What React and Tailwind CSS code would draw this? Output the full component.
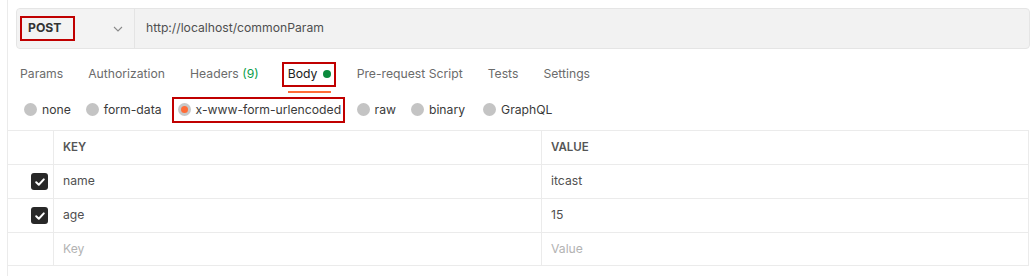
import React from "react";

function Radio({ label, selected }) {
  return (
    <div className="flex items-center gap-[5px] whitespace-nowrap">
      {selected ? (
        <span className="w-[13px] h-[13px] rounded-full bg-[#c8c8c8] flex items-center justify-center">
          <span className="w-[7px] h-[7px] rounded-full bg-[#ff6c37]"></span>
        </span>
      ) : (
        <span className="w-[13px] h-[13px] rounded-full bg-[#c4c4c4]"></span>
      )}
      <span className="text-[12.2px] text-[#3a3a3a]">{label}</span>
    </div>
  );
}

function Check() {
  return (
    <span className="w-[17px] h-[17px] rounded-[3px] bg-[#282828] flex items-center justify-center">
      <svg width="12" height="12" viewBox="0 0 12 12">
        <path d="M2.2 6.3 L4.8 8.8 L9.8 3.4" fill="none" stroke="#fff" strokeWidth="2" strokeLinecap="round" strokeLinejoin="round" />
      </svg>
    </span>
  );
}

export default function App() {
  const rows = [
    { check: true, key: "name", value: "itcast" },
    { check: true, key: "age", value: "15" },
    { check: false, key: "Key", value: "Value", placeholder: true },
  ];
  return (
    <div className="w-[1030px] h-[276px] bg-white font-['Inter',sans-serif] overflow-hidden">
      <div className="ml-[7px] border-l border-[#ebebeb] h-full pt-[8px]">
        {/* URL bar */}
        <div className="ml-[8px] w-[1014px] h-[41px] flex rounded-[4px] bg-[#f2f2f2] border border-[#e5e5e5]">
          <div className="w-[118px] flex items-center border-r border-[#e4e4e4] bg-[#f3f3f3] rounded-l-[4px]">
            <div className="ml-[3px] w-[55px] h-[25px] border-2 border-[#c00000] flex items-center pl-[6px]">
              <span className="text-[12.2px] font-bold text-[#333333]">POST</span>
            </div>
            <svg className="ml-[38px]" width="10" height="6" viewBox="0 0 10 6">
              <path d="M1 1 L5 5 L9 1" fill="none" stroke="#8a8a8a" strokeWidth="1.1" />
            </svg>
          </div>
          <div className="flex items-center pl-[11px] text-[12.2px] text-[#4f4f4f]">
            http://localhost/commonParam
          </div>
        </div>

        {/* Tabs */}
        <div className="flex items-center h-[30px] mt-[10px] pl-[12px] text-[12.2px] text-[#6b6b6b] whitespace-nowrap">
          <span>Params</span>
          <span className="ml-[25px]">Authorization</span>
          <span className="ml-[25px]">
            Headers <span className="text-[#0a9e4a]">(9)</span>
          </span>
          <div className="ml-[23px] relative w-[54px] h-[25px] border-2 border-[#c00000] flex items-center pl-[4px] gap-[6px]">
            <span className="text-[#212121]">Body</span>
            <span className="w-[8px] h-[8px] rounded-full bg-[#0b8a3c]"></span>
            <span className="absolute left-[4px] top-[27px] w-[43px] h-[2px] bg-[#ff6c37]"></span>
          </div>
          <span className="ml-[21px]">Pre-request Script</span>
          <span className="ml-[25px]">Tests</span>
          <span className="ml-[25px]">Settings</span>
        </div>

        {/* Body types */}
        <div className="flex items-center h-[28px] mt-[7px] pl-[16px]">
          <Radio label="none" />
          <div className="ml-[15px]"><Radio label="form-data" /></div>
          <div className="ml-[10px] h-[26px] w-[173px] border-2 border-[#c00000] flex items-center pl-[4px]">
            <Radio label="x-www-form-urlencoded" selected />
          </div>
          <div className="ml-[12px]"><Radio label="raw" /></div>
          <div className="ml-[15px]"><Radio label="binary" /></div>
          <div className="ml-[18px]"><Radio label="GraphQL" /></div>
        </div>

        {/* Table */}
        <div className="mt-[6px] w-[1021px] border-t border-r border-b border-[#ebebeb] text-[12.2px]">
          <div className="flex h-[34px] border-b border-[#ebebeb]">
            <div className="w-[46px] border-r border-[#ebebeb]"></div>
            <div className="w-[488px] border-r border-[#ebebeb] flex items-center pl-[9px] text-[11.5px] font-semibold text-[#555555]">KEY</div>
            <div className="flex-1 flex items-center pl-[9px] text-[11.5px] font-semibold text-[#555555]">VALUE</div>
          </div>
          {rows.map((r, i) => (
            <div key={i} className={"flex " + (i < rows.length - 1 ? "h-[34px] border-b border-[#ebebeb]" : "h-[32px]")}>
              <div className="w-[46px] border-r border-[#ebebeb] flex items-center justify-end pr-[5px]">
                {r.check && <Check />}
              </div>
              <div className={"w-[488px] border-r border-[#ebebeb] flex items-center pl-[9px] " + (r.placeholder ? "text-[#b3b3b3]" : "text-[#505050]")}>{r.key}</div>
              <div className={"flex-1 flex items-center pl-[9px] " + (r.placeholder ? "text-[#b3b3b3]" : "text-[#505050]")}>{r.value}</div>
            </div>
          ))}
        </div>
      </div>
    </div>
  );
}
